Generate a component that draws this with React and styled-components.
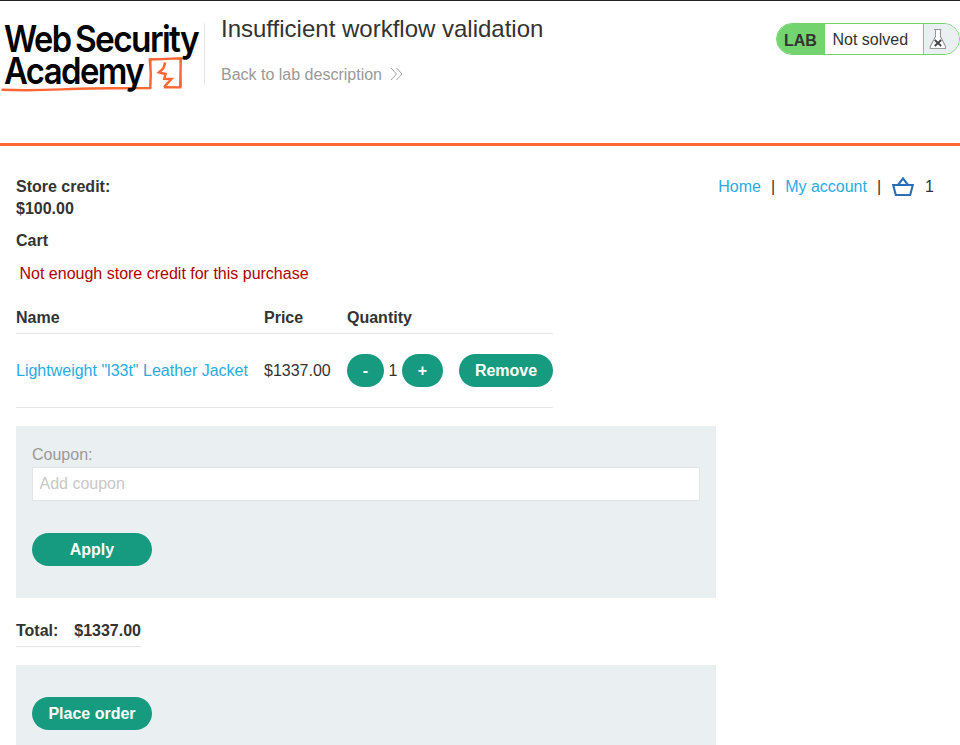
import React from "react";
import styled, { createGlobalStyle } from "styled-components";

const GlobalStyle = createGlobalStyle`
  * { box-sizing: border-box; }
  body {
    margin: 0;
    background: #fff;
    color: #333332;
    font: 16px/22px "Liberation Sans", Arial, sans-serif;
    overflow: hidden;
  }
`;

const Page = styled.div`
  height: 745px;
  overflow: hidden;
  border-top: 1px solid #222;
`;

const Header = styled.header`
  display: flex;
  align-items: flex-start;
  height: 145px;
  border-bottom: 3px solid #ff6633;
`;

const Logo = styled.svg`
  display: block;
  flex: none;
  margin-top: 4px;
  overflow: visible;
`;

const LogoWord = styled.text`
  font-family: Inter, sans-serif;
  font-weight: 600;
  font-size: 37px;
  letter-spacing: -1.8px;
  fill: #000;
`;

const TitleBlock = styled.div`
  flex: 1;
  padding-left: 16px;
  margin-top: 22px;
  height: 62px;
  border-left: 1px solid #e5e5e5;
`;

const Title = styled.h2`
  margin: -8px 0 0;
  font-size: 24px;
  line-height: 28px;
  font-weight: 400;
`;

const BackLink = styled.a`
  display: flex;
  align-items: center;
  gap: 8px;
  margin-top: 21px;
  color: #999;
  line-height: 22px;
  svg { margin-top: -2px; }
`;

const LabStatus = styled.div`
  display: flex;
  width: 184px;
  height: 32px;
  margin-top: 22px;
  border: 1px solid #72d36f;
  border-radius: 16px;
  overflow: hidden;
  line-height: 31px;
`;

const LabTag = styled.span`
  width: 48px;
  padding-left: 7px;
  line-height: 33px;
  background: #72d36f;
  font-weight: 700;
`;

const LabText = styled.span`
  flex: 1;
  padding-left: 7.5px;
`;

const LabFlask = styled.span`
  width: 36px;
  padding: 4px 0 0 5px;
  background: #eaeff2;
  border-left: 1px solid #72d36f;
  svg { display: block; }
`;

const Main = styled.main`
  padding: 30px 16px 0;
`;

const TopRow = styled.div`
  display: flex;
  justify-content: space-between;
  align-items: flex-start;
`;

const Credit = styled.strong`
  display: block;
  width: 100px;
`;

const Nav = styled.nav`
  display: flex;
  align-items: center;
  gap: 10px;
  padding-right: 10px;
  svg { display: block; margin-right: 1px; }
`;

const Link = styled.a`
  color: #29abe2;
`;

const Heading = styled.h4`
  margin: 10px 0 0;
  font-size: 16px;
  line-height: 22px;
`;

const Warning = styled.p`
  margin: 11px 0 0;
  padding-left: 3.5px;
  color: #b00000;
`;

const CartGrid = styled.div`
  display: grid;
  grid-template-columns: 232px 67px 96px 94px;
  column-gap: 16px;
  align-items: center;
  width: 537px;
  height: ${(p) => p.$height}px;
  margin-top: ${(p) => p.$gap || 0}px;
  border-bottom: 1px solid #e5e5e5;
  font-weight: ${(p) => (p.$head ? 700 : 400)};
  white-space: nowrap;
`;

const Quantity = styled.div`
  display: flex;
  align-items: center;
  justify-content: space-between;
`;

const Button = styled.button`
  width: ${(p) => p.$width}px;
  height: 33px;
  padding: 0;
  border: 0;
  border-radius: 17px;
  background: #179b80;
  color: #fff;
  font: 700 16px/33px "Liberation Sans", Arial, sans-serif;
`;

const Panel = styled.section`
  display: flex;
  flex-direction: column;
  align-items: flex-start;
  width: 700px;
  height: 172px;
  margin-top: 18px;
  padding: ${(p) => p.$top}px 16px 0;
  background: #eaeff2;
`;

const Label = styled.label`
  color: #999;
  line-height: 22px;
`;

const CouponInput = styled.input`
  width: 100%;
  height: 34px;
  margin: 1px 0 32px;
  padding: 0 6.5px 1px;
  border: 1px solid #e1e5e7;
  border-radius: 0;
  background: #fff;
  font: 16px "Liberation Sans", Arial, sans-serif;
  &::placeholder { color: #c8c8c8; opacity: 1; }
`;

const Total = styled.div`
  display: flex;
  justify-content: space-between;
  width: 125px;
  height: 27px;
  margin-top: 22px;
  border-bottom: 1px solid #e5e5e5;
  font-weight: 700;
`;

function AcademyLogo() {
  return (
    <Logo width="204" height="90" viewBox="0 5 204 90">
      <LogoWord x="4" y="51.5" textLength="66.5" lengthAdjust="spacingAndGlyphs">Web</LogoWord>
      <LogoWord x="75" y="51.5" textLength="123" lengthAdjust="spacingAndGlyphs">Security</LogoWord>
      <g fill="none" stroke="#ff6633">
        <path d="M1.5 89.8 Q30 90.8 62 89.4 T150.3 88 L150.8 74 L149.8 59.6 L180.8 58.4 L180.2 87.4 L164 87.2" strokeWidth="2.4" />
        <path d="M149 58.8 L181.5 58 M151 60 L150 87 M180 58 L181.4 87" strokeWidth="1" />
        <path d="M165.2 62.3 L163.4 68.4 L159 72.4 L165.5 74 L164.3 78.7 L171.5 79 L164 87" strokeWidth="2.5" />
      </g>
      <LogoWord x="4" y="84" textLength="139" lengthAdjust="spacingAndGlyphs">Academy</LogoWord>
    </Logo>
  );
}

function DoubleChevron() {
  return (
    <svg width="14" height="14" viewBox="0 0 14 14" fill="none" stroke="#999" strokeWidth="0.9">
      <path d="M1 1 L6.5 7 L1 13 M6.5 1 L12 7 L6.5 13" />
    </svg>
  );
}

function Flask() {
  return (
    <svg width="18" height="22" viewBox="0 0 18 22" fill="#fff" stroke="#999" strokeWidth="1.1">
      <path d="M5 1.5 H12.5 M6.5 1.5 V8.5 L1.3 18.5 V20.5 H16.5 V18.5 L11.5 8.5 V1.5" />
      <path d="M5.8 12 L12.2 18 M12.2 12 L5.8 18" stroke="#444" strokeWidth="1.8" />
    </svg>
  );
}

function Basket() {
  return (
    <svg width="23" height="20" viewBox="0 0 23 20" fill="none" stroke="#286fb7" strokeWidth="2.1">
      <path d="M2.2 8 H21.8 L19.2 18 H4.8 Z M7 8 L12 1.4 L17 8" />
    </svg>
  );
}

export default function App() {
  return (
    <Page>
      <GlobalStyle />
      <Header>
        <AcademyLogo />
        <TitleBlock>
          <Title>Insufficient workflow validation</Title>
          <BackLink>Back to lab description <DoubleChevron /></BackLink>
        </TitleBlock>
        <LabStatus>
          <LabTag>LAB</LabTag>
          <LabText>Not solved</LabText>
          <LabFlask><Flask /></LabFlask>
        </LabStatus>
      </Header>
      <Main>
        <TopRow>
          <Credit>Store credit: $100.00</Credit>
          <Nav>
            <Link>Home</Link>
            <span>|</span>
            <Link>My account</Link>
            <span>|</span>
            <Basket />
            <span>1</span>
          </Nav>
        </TopRow>
        <Heading>Cart</Heading>
        <Warning>Not enough store credit for this purchase</Warning>
        <CartGrid $head $height={31} $gap={18}>
          <span>Name</span>
          <span>Price</span>
          <span>Quantity</span>
        </CartGrid>
        <CartGrid $height={74}>
          <Link>Lightweight "l33t" Leather Jacket</Link>
          <span>$1337.00</span>
          <Quantity>
            <Button $width={37}>-</Button>
            <span>1</span>
            <Button $width={41}>+</Button>
          </Quantity>
          <Button $width={94}>Remove</Button>
        </CartGrid>
        <Panel $top={18}>
          <Label htmlFor="coupon">Coupon:</Label>
          <CouponInput id="coupon" placeholder="Add coupon" />
          <Button $width={120}>Apply</Button>
        </Panel>
        <Total>
          <span>Total:</span>
          <span>$1337.00</span>
        </Total>
        <Panel $top={32}>
          <Button $width={120}>Place order</Button>
        </Panel>
      </Main>
    </Page>
  );
}
